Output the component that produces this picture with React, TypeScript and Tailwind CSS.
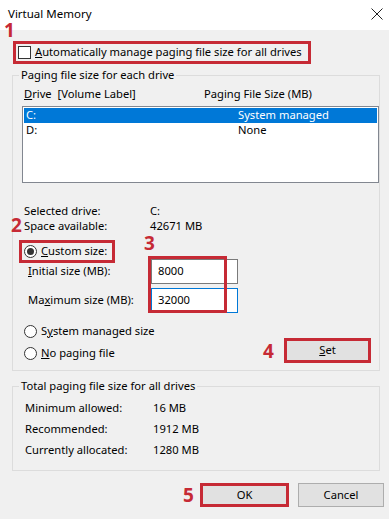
import React from 'react'

const RED = 'border-[#c62a35]'

function Radio({ checked }: { checked?: boolean }) {
  return (
    <span className="w-[13px] h-[13px] rounded-full border border-[#333] bg-white flex items-center justify-center shrink-0">
      {checked && <span className="w-[7px] h-[7px] rounded-full bg-[#333]" />}
    </span>
  )
}

function Mark({ n, className }: { n: string; className: string }) {
  return (
    <span className={`absolute text-[19px] leading-[15px] font-bold text-[#c62a35] ${className}`}>{n}</span>
  )
}

export default function App() {
  return (
    <div
      className="relative w-[389px] h-[519px] bg-[#f0f0f0] text-[11.2px] text-black overflow-hidden whitespace-nowrap"
      style={{ fontFamily: '"Noto Sans", "Liberation Sans", sans-serif' }}
    >
      {/* title bar */}
      <div className="h-[30px] bg-white flex items-center justify-between pl-[8px] pr-[5px] pb-[2px]">
        <span className="text-[11.5px] leading-[12px]">Virtual Memory</span>
        <svg width="12" height="12" viewBox="0 0 12 12" className="mr-[1px]">
          <path d="M0.5 0.5 L11.5 11.5 M11.5 0.5 L0.5 11.5" stroke="#222" strokeWidth="1" />
        </svg>
      </div>

      {/* auto manage */}
      <div className={`ml-[13px] mt-[11px] w-[298px] h-[23px] border-[3px] ${RED} flex items-center pl-[2px] gap-[4px]`}>
        <span className="w-[13px] h-[13px] border border-[#333] bg-white shrink-0" />
        <span>
          <span className="underline">A</span>utomatically manage paging file size for all drives
        </span>
      </div>

      {/* paging file size for each drive */}
      <div className="relative mt-[11px] ml-[12px] w-[368px] border border-[#dcdcdc] pt-[10px] pb-[9px]">
        <span className="absolute left-[6px] top-[-9px] bg-[#f0f0f0] px-[2px] leading-[16px]">
          Paging file size for each drive
        </span>
        <div className="flex pl-[11px] h-[16px] items-center">
          <span className="w-[180px] whitespace-pre">
            <span className="underline">D</span>rive  [Volume Label]
          </span>
          <span>Paging File Size (MB)</span>
        </div>
        <div className="mt-[4px] ml-[9px] w-[357px] h-[77px] border border-[#828790] bg-white p-[1px]">
          <div className="flex h-[15px] items-center bg-[#0078d7] text-white">
            <span className="w-[214px] pl-[2px]">C:</span>
            <span>System managed</span>
          </div>
          <div className="flex h-[15px] items-center">
            <span className="w-[214px] pl-[2px]">D:</span>
            <span>None</span>
          </div>
        </div>

        <div className="mt-[21px] pl-[11px]">
          <div className="flex h-[15px] items-center">
            <span className="w-[126px]">Selected drive:</span>
            <span>C:</span>
          </div>
          <div className="flex h-[15px] items-center">
            <span className="w-[126px]">Space available:</span>
            <span>42671 MB</span>
          </div>
        </div>

        <div className={`mt-[6px] ml-[6px] w-[96px] h-[23px] border-[3px] ${RED} flex items-center pl-[2px] gap-[4px]`}>
          <Radio checked />
          <span>
            <span className="underline">C</span>ustom size:
          </span>
        </div>

        <div className="-mt-[4px] flex flex-col gap-[4px]">
          <div className="flex items-center">
            <span className="w-[138px] pl-[15px]">
              <span className="underline">I</span>nitial size (MB):
            </span>
            <div className="w-[87px] h-[25px] border border-[#7a7a7a] bg-white flex items-center pl-[6px]">8000</div>
          </div>
          <div className="flex items-center">
            <span className="w-[138px] pl-[15px]">
              Ma<span className="underline">x</span>imum size (MB):
            </span>
            <div className="w-[87px] h-[25px] border border-[#0078d7] bg-white flex items-center pl-[6px]">32000</div>
          </div>
        </div>

        <div className="mt-[10px] flex items-end justify-between pr-[8px]">
          <div className="flex flex-col gap-[6px] pl-[11px]">
            <div className="flex h-[16px] items-center gap-[4px]">
              <Radio />
              <span>
                S<span className="underline">y</span>stem managed size
              </span>
            </div>
            <div className="flex h-[16px] items-center gap-[4px]">
              <Radio />
              <span>
                <span className="underline">N</span>o paging file
              </span>
            </div>
          </div>
          <button className={`w-[87px] h-[25px] -mb-[2px] border-[3px] ${RED} bg-[#e1e1e1] flex items-center justify-center`}>
            <span>
              <span className="underline">S</span>et
            </span>
          </button>
        </div>
      </div>

      {/* total */}
      <div className="relative mt-[15px] ml-[12px] w-[368px] border border-[#dcdcdc] pt-[11px] pb-[9px] pl-[12px]">
        <span className="absolute left-[6px] top-[-9px] bg-[#f0f0f0] px-[2px] leading-[16px]">
          Total paging file size for all drives
        </span>
        {[
          ['Minimum allowed:', '16 MB'],
          ['Recommended:', '1912 MB'],
          ['Currently allocated:', '1280 MB'],
        ].map(([k, v]) => (
          <div key={k} className="flex h-[21px] items-center">
            <span className="w-[128px]">{k}</span>
            <span>{v}</span>
          </div>
        ))}
      </div>

      <div className="mt-[12px] flex justify-end gap-[9px] pr-[5px]">
        <button className={`w-[89px] h-[24px] border-[3px] ${RED} bg-[#e1e1e1]`}>OK</button>
        <button className="w-[86px] h-[24px] border border-[#adadad] bg-[#e1e1e1]">Cancel</button>
      </div>

      {/* overlay box around the inputs */}
      <div className={`absolute left-[148px] top-[256px] w-[79px] h-[57px] border-[3px] ${RED}`} />

      <Mark n="1" className="left-[4px] top-[23px]" />
      <Mark n="2" className="left-[11px] top-[218px]" />
      <Mark n="3" className="left-[144px] top-[236px]" />
      <Mark n="4" className="left-[263px] top-[344px]" />
      <Mark n="5" className="left-[183px] top-[488px]" />
    </div>
  )
}
